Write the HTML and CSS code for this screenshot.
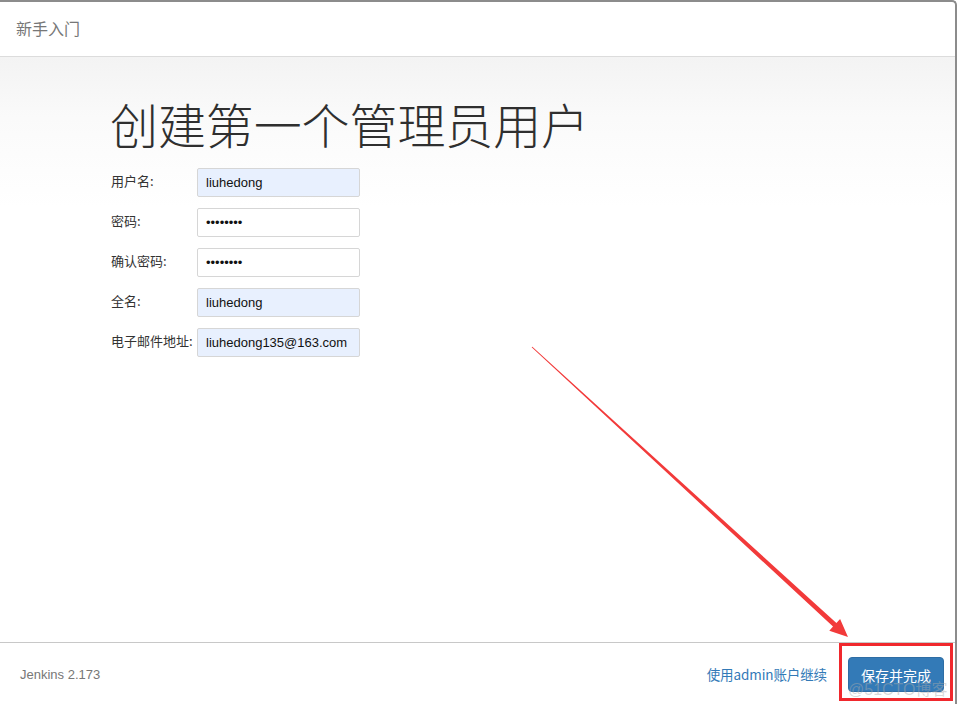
FILE: index.html
```html
<!DOCTYPE html>
<html lang="zh-CN">
<head>
<meta charset="utf-8">
<title>新手入门</title>
<link rel="stylesheet" href="styles.css">
</head>
<body>
<div class="frame">
  <header class="top">
    <span class="top-title">新手入门</span>
  </header>
  <main class="content">
    <h1 class="page-title">创建第一个管理员用户</h1>
    <form class="form">
      <div class="row">
        <label class="label">用户名:</label>
        <input class="field autofill" type="text" value="liuhedong">
      </div>
      <div class="row">
        <label class="label">密码:</label>
        <input class="field" type="password" value="liuhedon">
      </div>
      <div class="row">
        <label class="label">确认密码:</label>
        <input class="field" type="password" value="liuhedon">
      </div>
      <div class="row">
        <label class="label">全名:</label>
        <input class="field autofill" type="text" value="liuhedong">
      </div>
      <div class="row">
        <label class="label">电子邮件地址:</label>
        <input class="field autofill" type="text" value="liuhedong135@163.com">
      </div>
    </form>
  </main>
  <footer class="bottom">
    <span class="version">Jenkins 2.173</span>
    <div class="actions">
      <a class="skip" href="#">使用admin账户继续</a>
      <button class="save" type="button">保存并完成</button>
    </div>
  </footer>
  <svg class="annot" width="958" height="704" viewBox="0 0 958 704">
    <polygon fill="#f23a3a" points="532.34,346.63 836.4,623.0 840.1,618.9 848,637 829.3,630.7 833.0,626.6 531.66,347.37"/>
  </svg>
  <div class="highlight"></div>
  <div class="watermark">@51CTO博客</div>
</div>
</body>
</html>
```
FILE: styles.css
```css
html, body {
  margin: 0;
  padding: 0;
  background: #fff;
}
body {
  font-family: "Noto Sans CJK SC", "Liberation Sans", sans-serif;
  color: #333;
}
.frame {
  position: relative;
  width: 957px;
  height: 704px;
  box-sizing: border-box;
  border-top: 2px solid #8c8c8c;
  border-right: 2px solid #8c8c8c;
  border-top-right-radius: 5px;
  display: flex;
  flex-direction: column;
  overflow: hidden;
}
.top {
  height: 54px;
  border-bottom: 1px solid #dcdcdc;
  display: flex;
  align-items: center;
  padding-left: 16px;
  flex: none;
}
.top-title {
  font-size: 16px;
  color: #777;
  position: relative;
  top: -1px;
}
.content {
  flex: 1;
  background: linear-gradient(#f3f3f3 0px, #fafafa 60px, #fff 150px);
  padding-left: 110px;
  padding-top: 37px;
}
.page-title {
  margin: 0;
  font-size: 48px;
  font-weight: 300;
  line-height: 58px;
  color: #2f2f2f;
  letter-spacing: -0.1px;
}
.form {
  margin-top: 16px;
  display: flex;
  flex-direction: column;
  gap: 11px;
}
.row {
  display: flex;
  align-items: center;
  height: 29px;
}
.label {
  width: 86px;
  font-size: 13px;
  color: #333;
  padding-left: 1px;
  position: relative;
  top: -2px;
}
.field {
  width: 163px;
  height: 29px;
  box-sizing: border-box;
  border: 1px solid #d6d6d6;
  border-radius: 2px;
  padding: 0 8px;
  font-family: "Liberation Sans", Arial, sans-serif;
  font-size: 13px;
  color: #111;
  background: #fff;
  margin: 0;
}
.field.autofill {
  background: #e8f0fe;
}
.bottom {
  flex: none;
  height: 61px;
  border-top: 1px solid #c8c8c8;
  display: flex;
  align-items: center;
  justify-content: space-between;
  padding: 0 11px 0 20px;
}
.version {
  font-family: "Liberation Sans", Arial, sans-serif;
  font-size: 13px;
  color: #777;
  position: relative;
  top: 1px;
}
.actions {
  display: flex;
  align-items: center;
  gap: 21px;
}
.skip {
  color: #337ab7;
  text-decoration: none;
  font-size: 13.5px;
  letter-spacing: -0.1px;
}
.save {
  width: 96px;
  height: 35px;
  background: #337ab7;
  border: 1px solid #2e6da4;
  border-radius: 4px;
  color: #fff;
  font-family: "Noto Sans CJK SC", sans-serif;
  font-size: 14px;
  padding: 0;
  position: relative;
  top: 1px;
}
.annot {
  position: absolute;
  left: 0;
  top: -2px;
  pointer-events: none;
}
.highlight {
  position: absolute;
  left: 839px;
  top: 641px;
  width: 114px;
  height: 58px;
  box-sizing: border-box;
  border: 3px solid #f0282d;
  pointer-events: none;
}
.watermark {
  position: absolute;
  left: 848px;
  top: 674px;
  font-family: "Liberation Sans", "Noto Sans CJK SC", sans-serif;
  font-size: 16px;
  color: rgba(170, 170, 170, 0.45);
  pointer-events: none;
}
```
